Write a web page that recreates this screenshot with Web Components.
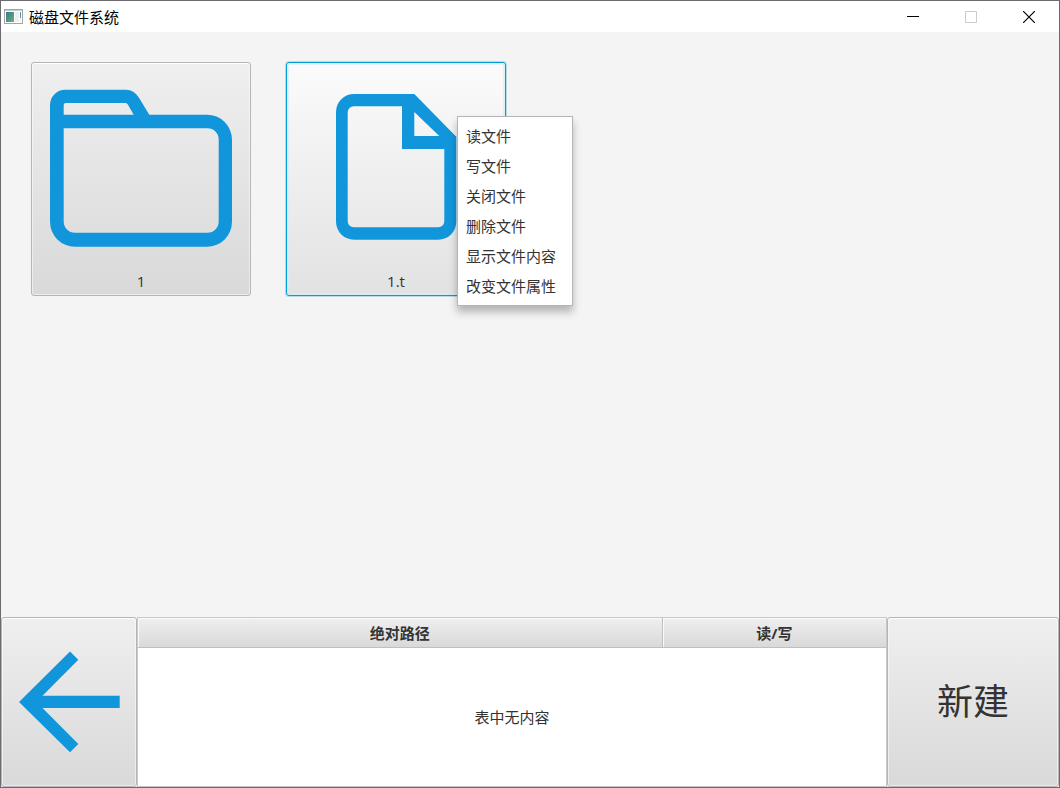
<!DOCTYPE html>
<html lang="zh-CN">
<head>
<meta charset="utf-8">
<meta name="viewport" content="width=device-width, initial-scale=1">
<title>磁盘文件系统</title>
<style>
  html, body { margin: 0; }
  body {
    --accent: #1296db;
    --face: linear-gradient(#efefef, #d9d9d9);
    --edge: #b5b5b5;
    --frame: #6b6a70;
    font: 15px/20px "Open Sans", "Noto Sans CJK SC", sans-serif;
    color: #333;
  }
</style>
</head>
<body>
<disk-window heading="磁盘文件系统">
  <file-tile kind="folder" name="1"></file-tile>
  <file-tile kind="file" name="1.t" selected>
    <context-menu slot="menu">
      <menu-entry>读文件</menu-entry>
      <menu-entry>写文件</menu-entry>
      <menu-entry>关闭文件</menu-entry>
      <menu-entry>删除文件</menu-entry>
      <menu-entry>显示文件内容</menu-entry>
      <menu-entry>改变文件属性</menu-entry>
    </context-menu>
  </file-tile>
  <push-button slot="footer" class="back" label="返回">
    <svg width="120" height="120" viewBox="0 0 120 120" aria-hidden="true"><path fill="#1296db" d="M10 60 61 9.5 69.3 17.7 33.5 53.7H110.7V66H33.5L69.3 102 61 110.3Z"/></svg>
  </push-button>
  <open-files-table slot="footer"></open-files-table>
  <push-button slot="footer" class="create">新建</push-button>
</disk-window>

<script>
class BaseElement extends HTMLElement {
  render(html) {
    const template = document.createElement('template');
    template.innerHTML = html;
    this.attachShadow({ mode: 'open' }).append(template.content.cloneNode(true));
  }
}

customElements.define('title-bar', class extends BaseElement {
  connectedCallback() {
    if (this.shadowRoot) return;
    this.render(`
      <style>
        :host { display: flex; align-items: center; height: 31px; padding: 0 1px 0 3px; background: #fff; color: #000; }
        .app { margin-right: 6px; flex: none; }
        h1 { flex: 1; margin: 0; font: inherit; }
        button { width: 58px; height: 31px; padding: 0; border: 0; background: none; display: grid; place-items: center; color: inherit; }
        button:disabled { color: #ccc; }
        button:not(:disabled):hover { background: #e5e5e5; }
        svg { display: block; }
      </style>
      <svg class="app" width="19" height="15" viewBox="0 0 19 15" aria-hidden="true">
        <defs><linearGradient id="g" x2="1" y2="1"><stop stop-color="#3d7391"/><stop offset="1" stop-color="#68b577"/></linearGradient></defs>
        <rect x=".5" y=".5" width="18" height="14" fill="#fff" stroke="#a5a5a5"/>
        <rect x="1" y="1" width="17" height="1" fill="#c6cbd0"/>
        <rect x="2" y="3" width="8" height="10" fill="url(#g)"/>
        <rect x="11" y="3" width="4" height="10" fill="#eee"/>
        <rect x="16" y="3" width="1" height="6" fill="#4f9a98"/><rect x="16" y="9" width="1" height="4" fill="#eee"/>
      </svg>
      <h1><slot></slot></h1>
      <button type="button" aria-label="最小化"><svg width="12" height="12"><path d="M0 5.5H12" stroke="currentColor"/></svg></button>
      <button type="button" aria-label="最大化" disabled><svg width="12" height="12"><path d="M.5.5H11.5V11.5H.5Z" fill="none" stroke="currentColor"/></svg></button>
      <button type="button" aria-label="关闭"><svg width="12" height="12"><path d="M0 0 12 12M12 0 0 12" stroke="currentColor" stroke-width="1.2"/></svg></button>`);
  }
});

customElements.define('disk-window', class extends BaseElement {
  connectedCallback() {
    if (this.shadowRoot) return;
    this.render(`
      <style>
        :host { display: flex; flex-direction: column; box-sizing: border-box; min-height: 100vh; border: 1px solid var(--frame); background: #f4f4f4; }
        main { flex: 1; display: flex; flex-wrap: wrap; align-content: flex-start; gap: 35px; padding: 30px; }
        footer { display: flex; align-items: stretch; height: 170px; }
        ::slotted(.back) { flex: 0 0 136px; }
        ::slotted(.create) { flex: 0 0 172px; font-size: 36px; line-height: 48px; }
        ::slotted(open-files-table) { flex: 1; min-width: 0; }
      </style>
      <title-bar>${this.getAttribute('heading')}</title-bar>
      <main><slot></slot></main>
      <footer><slot name="footer"></slot></footer>`);
  }
});

const ICONS = {
  folder: 'M9 37A15.3 15.3 0 0 1 24.3 21.7H85Q93 21.7 98 29.7L108.3 46.7H166A25 25 0 0 1 191 71.7V153.7A25 25 0 0 1 166 178.7H34A25 25 0 0 1 9 153.7ZM22.7 46.7H92.7L86.8 36.5Q86 35 84.6 35H24.7Q22.7 35 22.7 37ZM22.7 60.3V153.5A11.2 11.2 0 0 0 33.9 164.7H166.5A11.2 11.2 0 0 0 177.7 153.5V71.5A11.2 11.2 0 0 0 166.5 60.3Z',
  file: 'M40 44A18 18 0 0 1 58 26H118.3L160.3 68.7V153.7A18 18 0 0 1 142.3 171.7H58A18 18 0 0 1 40 153.7ZM51.7 44.3V153.3A6 6 0 0 0 57.7 159.3H142.3A6 6 0 0 0 148.3 153.3V81H106V38.3H57.7A6 6 0 0 0 51.7 44.3ZM118.3 44V68H143.3Z'
};

customElements.define('file-tile', class extends BaseElement {
  connectedCallback() {
    if (this.shadowRoot) return;
    this.render(`
      <style>
        :host { display: block; position: relative; }
        button { display: flex; flex-direction: column; align-items: center; gap: 3px; box-sizing: border-box; width: 220px; padding: 5px 9px 4px; border: 1px solid var(--edge); border-radius: 3px; background: var(--face); box-shadow: inset 0 1px #fff, inset 0 0 0 1px #ffffff80; font: inherit; color: inherit; }
        :host([selected]) button { border-color: #039ed3; background: linear-gradient(#fbfbfb, #e2e2e2); box-shadow: 0 0 0 1px #039ed344, inset 0 0 0 2px #d5edf3aa; }
        svg { display: block; fill: var(--accent); }
        /* the pop-up opens at the pointer, over the tile */
        ::slotted(context-menu) { position: absolute; left: 171px; top: 54px; z-index: 1; }
      </style>
      <button type="button">
        <svg width="200" height="200" viewBox="0 0 200 200" aria-hidden="true"><path fill-rule="evenodd" d="${ICONS[this.getAttribute('kind')]}"/></svg>
        <span></span>
      </button>
      <slot name="menu"></slot>`);
    this.shadowRoot.querySelector('span').textContent = this.getAttribute('name');
  }
});

customElements.define('context-menu', class extends BaseElement {
  connectedCallback() {
    if (this.shadowRoot) return;
    this.render(`
      <style>
        :host { display: block; box-sizing: border-box; padding: 4px 0; border: 1px solid #b5b5b5; background: #fff; box-shadow: 0 6px 8px #0004; white-space: nowrap; }
      </style>
      <div role="menu"><slot></slot></div>`);
  }
});

customElements.define('menu-entry', class extends BaseElement {
  connectedCallback() {
    if (this.shadowRoot) return;
    this.render(`
      <style>
        :host { display: block; }
        button { display: block; width: 100%; padding: 5px 16px 5px 8px; border: 0; background: none; font: inherit; color: inherit; text-align: left; }
        button:hover { background: #0096c9; color: #fff; }
      </style>
      <button type="button" role="menuitem"><slot></slot></button>`);
  }
});

customElements.define('push-button', class extends BaseElement {
  connectedCallback() {
    if (this.shadowRoot) return;
    this.render(`
      <style>
        :host { display: flex; }
        button { flex: 1; display: grid; place-items: center; padding: 0; border: 1px solid var(--edge); border-radius: 3px; background: var(--face); box-shadow: inset 0 1px #fff, inset 0 0 0 1px #ffffff80; font: inherit; color: inherit; }
        ::slotted(svg) { display: block; }
      </style>
      <button type="button"><slot></slot></button>`);
    const label = this.getAttribute('label');
    if (label) this.shadowRoot.querySelector('button').setAttribute('aria-label', label);
  }
});

customElements.define('open-files-table', class extends BaseElement {
  connectedCallback() {
    if (this.shadowRoot) return;
    this.render(`
      <style>
        :host { display: block; box-sizing: border-box; border: 1px solid #c8c8c8; background: #fff; }
        table { width: 100%; height: 100%; border-collapse: separate; border-spacing: 0; table-layout: fixed; }
        th, td { padding: 0; text-align: center; }
        th { height: 29px; border-bottom: 1px solid #c0c0c0; background: var(--face); box-shadow: inset 1px 1px #fafafa; font-weight: bold; }
        th:first-child { width: 70%; border-right: 1px solid #c0c0c0; }
      </style>
      <table>
        <thead><tr><th scope="col">绝对路径</th><th scope="col">读/写</th></tr></thead>
        <tbody><tr><td colspan="2">表中无内容</td></tr></tbody>
      </table>`);
  }
});
</script>
</body>
</html>
